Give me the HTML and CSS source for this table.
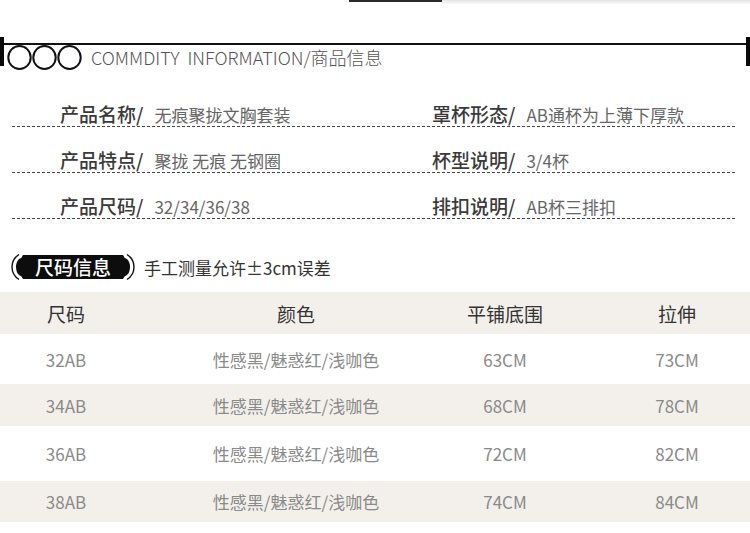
FILE: index.html
```html
<!DOCTYPE html>
<html lang="zh-CN">
<head>
<meta charset="utf-8">
<title>商品信息</title>
<link rel="stylesheet" href="styles.css">
</head>
<body>
<div class="topstrip"><div class="dark"></div><div class="fade"></div></div>

<div class="sechead">
  <div class="vbar"></div>
  <div class="secmid">
    <svg class="rings" width="76" height="25" viewBox="0 0 76 25">
      <ellipse cx="12.5" cy="12.5" rx="11.2" ry="11.5" fill="none" stroke="#111" stroke-width="2"/>
      <ellipse cx="37.5" cy="12.5" rx="11.2" ry="11.5" fill="none" stroke="#111" stroke-width="2"/>
      <ellipse cx="62.5" cy="12.5" rx="11.2" ry="11.5" fill="none" stroke="#111" stroke-width="2"/>
    </svg>
    <span class="sectitle">COMMDITY&nbsp; INFORMATION/商品信息</span>
  </div>
  <div class="vbar"></div>
</div>

<div class="info">
  <div class="inforow">
    <div class="cell"><span class="lab">产品名称/</span><span class="val">无痕聚拢文胸套装</span></div>
    <div class="cell"><span class="lab">罩杯形态/</span><span class="val">AB通杯为上薄下厚款</span></div>
  </div>
  <div class="inforow">
    <div class="cell"><span class="lab">产品特点/</span><span class="val">聚拢 无痕 无钢圈</span></div>
    <div class="cell"><span class="lab">杯型说明/</span><span class="val">3/4杯</span></div>
  </div>
  <div class="inforow">
    <div class="cell"><span class="lab">产品尺码/</span><span class="val">32/34/36/38</span></div>
    <div class="cell"><span class="lab">排扣说明/</span><span class="val">AB杯三排扣</span></div>
  </div>
</div>

<div class="sizehead">
  <div class="badge">
    <svg class="badgebg" width="124" height="28" viewBox="0 0 124 28">
      <path d="M12 2 H112 Q113 5 116 6 Q119 9 119 14 Q119 19 116 22 Q113 23 112 26 H12 Q11 23 8 22 Q5 19 5 14 Q5 9 8 6 Q11 5 12 2 Z" fill="#0d0d0d"/>
      <path d="M8 1.5 Q1 6 1 14 Q1 22 8 26.5" fill="none" stroke="#111" stroke-width="1.4"/>
      <path d="M116 1.5 Q123 6 123 14 Q123 22 116 26.5" fill="none" stroke="#111" stroke-width="1.4"/>
    </svg>
    <span class="badgetext">尺码信息</span>
  </div>
  <span class="note">手工测量允许±3cm误差</span>
</div>

<div class="table">
  <div class="trow thead">
    <div>尺码</div><div>颜色</div><div>平铺底围</div><div class="c4">拉伸</div>
  </div>
  <div class="trow r1">
    <div>32AB</div><div>性感黑/魅惑红/浅咖色</div><div>63CM</div><div class="c4">73CM</div>
  </div>
  <div class="trow r2 shade">
    <div>34AB</div><div>性感黑/魅惑红/浅咖色</div><div>68CM</div><div class="c4">78CM</div>
  </div>
  <div class="trow r3">
    <div>36AB</div><div>性感黑/魅惑红/浅咖色</div><div>72CM</div><div class="c4">82CM</div>
  </div>
  <div class="trow r4 shade">
    <div>38AB</div><div>性感黑/魅惑红/浅咖色</div><div>74CM</div><div class="c4">84CM</div>
  </div>
</div>
</body>
</html>
```

FILE: styles.css
```css
html, body {
  margin: 0;
  padding: 0;
  background: #fff;
  font-family: "Noto Sans CJK SC", "Noto Sans", sans-serif;
  width: 750px;
  height: 533px;
  overflow: hidden;
}

.topstrip {
  display: flex;
  height: 5px;
  padding-left: 349px;
}
.topstrip .dark {
  width: 93px;
  height: 2px;
  background: #2a2a2a;
}
.topstrip .fade {
  flex: 1;
  height: 4px;
  background: linear-gradient(to bottom, #e4e4e4, #fafafa);
}

.sechead {
  display: flex;
  margin-top: 32px;
  height: 29px;
}
.vbar {
  width: 4px;
  height: 29px;
  background: #0a0a0a;
}
.secmid {
  flex: 1;
  margin-top: 6px;
  border-top: 2px solid #111;
  display: flex;
  align-items: flex-start;
}
.rings {
  margin-left: 3px;
  display: block;
}
.sectitle {
  margin-left: 8px;
  margin-top: 1px;
  font-size: 18px;
  line-height: 22px;
  font-weight: 300;
  color: #555;
}

.info {
  margin: 15px 13px 0 12px;
}
.inforow {
  display: grid;
  grid-template-columns: 420px 1fr;
  height: 46px;
  align-items: end;
  background-image: linear-gradient(to right, #444 0 3px, transparent 3px 5px);
  background-size: 5px 1px;
  background-repeat: repeat-x;
  background-position: left bottom;
}
.cell {
  display: flex;
  align-items: baseline;
  padding-left: 48px;
  padding-bottom: 1px;
  line-height: 22px;
}
.cell + .cell {
  padding-left: 0;
}
.lab {
  font-size: 19px;
  font-weight: 500;
  color: #3a3a3a;
}
.val {
  margin-left: 11px;
  font-size: 17px;
  color: #666;
}

.sizehead {
  display: flex;
  align-items: center;
  margin: 34px 0 0 11px;
  height: 28px;
}
.badge {
  display: grid;
  width: 124px;
  height: 28px;
}
.badgebg, .badgetext {
  grid-area: 1 / 1;
}
.badgetext {
  justify-self: center;
  align-self: center;
  color: #fff;
  font-size: 19px;
  font-weight: 500;
  line-height: 28px;
}
.note {
  margin-left: 9px;
  font-size: 17px;
  color: #333;
}

.table {
  margin-top: 11px;
}
.trow {
  display: grid;
  grid-template-columns: 132px 328px 90px 200px;
  align-items: center;
  text-align: center;
  font-size: 17px;
  color: #8a8a8a;
}
.trow .c4 {
  padding-left: 54px;
}
.thead {
  height: 42px;
  background: #f3f0ec;
  font-size: 19px;
  color: #333;
}
.r1 { height: 50px; }
.r2 { height: 42px; }
.r3 { height: 55px; }
.r4 { height: 41px; }
.shade {
  background: #f3f0ec;
}
```
